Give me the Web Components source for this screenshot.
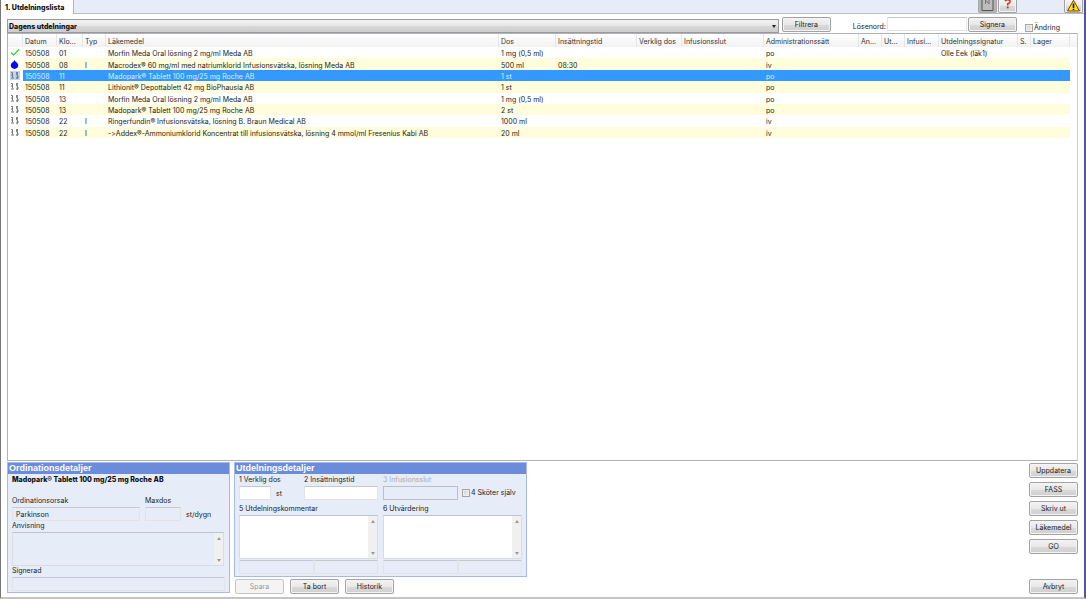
<!DOCTYPE html>
<html lang="sv">
<head>
<meta charset="utf-8">
<title>Utdelningslista</title>
<style>
  body { margin: 0; font: 7px/9px Inter, "Liberation Sans", sans-serif; font-feature-settings: "calt" 0; color: #222; }
</style>
</head>
<body>
<med-app></med-app>
<script>
const define = (name, html, setup) => {
  const template = document.createElement('template');
  template.innerHTML = html;
  customElements.define(name, class extends HTMLElement {
    constructor() {
      super();
      this.attachShadow({ mode: 'open' }).append(template.content.cloneNode(true));
    }
    connectedCallback() { if (setup) setup(this, this.shadowRoot); }
  });
};

/* Push button */
define('med-button', `
<style>
  :host { display: block; width: 49px; height: 15px; }
  button { box-sizing: border-box; width: 100%; height: 100%; padding: 0; border: 1px solid #a2a2a2; border-radius: 2px;
    background: linear-gradient(#f3f3f3, #e8e8e8 50%, #dadada 51%, #cfcfcf); box-shadow: inset 0 0 0 1px #f4f4f4;
    font: inherit; color: #222; display: flex; align-items: center; justify-content: center; }
  button:disabled { background: #f4f4f4; border-color: #c6c6c6; color: #999; }
  :host([icon]) { width: 19px; height: 13px; }
  :host([icon]) button { border-top: 0; border-radius: 0 0 2px 2px; align-items: flex-start; overflow: hidden; }
  :host([pressed]) button { background: #b4b4b4; box-shadow: none; border-color: #aaa; }
</style>
<button type="button"><slot></slot></button>`, (host, root) => {
  const button = root.querySelector('button');
  button.disabled = host.hasAttribute('disabled');
  if (host.title) button.setAttribute('aria-label', host.title);
});

/* Tick box with its label */
define('med-check', `
<style>
  :host { display: block; }
  label { display: flex; align-items: center; gap: 1px; white-space: nowrap; }
  input { appearance: none; box-sizing: border-box; width: 8px; height: 8px; margin: 0; border: 1px solid #a4a4a4;
    background: linear-gradient(135deg, #c9cdd2, #f4f4f4); box-shadow: inset 0 0 0 1px #eee; }
</style>
<label><input type="checkbox"><slot></slot></label>`);

/* Text area with a scroll track at its right */
define('med-area', `
<style>
  :host { display: flex; flex-direction: column; }
  label { height: 11px; white-space: nowrap; }
  .box { flex: 1; display: flex; box-sizing: border-box; border: 1px solid #dcdcdc; border-top-color: #bfc3ca; background: #fff; }
  :host([readonly]) .box { background: #e6edf9; }
  textarea { flex: 1; min-width: 0; border: 0; padding: 1px 3px; margin: 0; background: none; resize: none; overflow: hidden; font: inherit; outline: 0; }
  .track { width: 9px; background: #f0f0f0; display: flex; flex-direction: column; justify-content: space-between; align-items: center; padding: 4px 0 3px; box-sizing: border-box; }
  svg { display: block; width: 4px; height: 3px; fill: #999; }
</style>
<label for="t"><slot></slot></label>
<div class="box"><textarea id="t"></textarea>
  <div class="track"><svg viewBox="0 0 4 3"><path d="M2 0L4 3H0z"/></svg><svg viewBox="0 0 4 3"><path d="M2 3L4 0H0z"/></svg></div>
</div>`, (host, root) => {
  root.querySelector('textarea').readOnly = host.hasAttribute('readonly');
});

/* Single-line field with its label above */
define('med-field', `
<style>
  :host { display: block; }
  label { display: flex; flex-direction: column; white-space: nowrap; }
  span { height: 11px; }
  input { box-sizing: border-box; width: 100%; min-width: 0; height: 14px; padding: 0 3px; margin: 0; border: 1px solid #e3e3e3; border-top-color: #c6cad0;
    border-radius: 0; background: #fff; font: inherit; color: #222; }
  :host([readonly]) input { background: #e6edf9; }
  :host([disabled]) span { color: #aaa; }
  :host([disabled]) input { background: #e6edf9; border-color: #bcbfc6; }
  :host([bare]) span { display: none; }
</style>
<label><span><slot></slot></span><input type="text"></label>`, (host, root) => {
  const input = root.querySelector('input');
  input.value = host.getAttribute('value') || '';
  input.readOnly = host.hasAttribute('readonly');
  input.disabled = host.hasAttribute('disabled');
  if (host.hasAttribute('bare')) input.setAttribute('aria-label', host.title);
});

/* Blue-headed panel */
define('med-panel', `
<style>
  :host { display: flex; flex-direction: column; box-sizing: border-box; border: 1px solid #a5b9ec; background: #e6edf9; }
  h2 { margin: 0; padding: 0 1px; height: 11px; background: #6b8bdb; color: #fff; font: bold 9px/11px "Liberation Sans", Arial, sans-serif; }
</style>
<h2><slot name="title"></slot></h2><slot></slot>`);

define('med-tabs', `
<style>
  :host { display: flex; height: 13px; background: #e6edf9; border-bottom: 1px solid #b9bfc9; }
  a { display: block; box-sizing: border-box; height: 14px; padding: 3px 9px 0 4px; background: #fff; border-right: 1px solid #b0b6c0; color: #111; font-weight: 800; text-decoration: none; white-space: nowrap; }
  nav { flex: 1; display: flex; }
  .tools { display: flex; gap: 1px; padding-right: 1px; }
  .warn { margin-left: 46px; }
  svg { display: block; }
</style>
<nav><a href="#lista">1. Utdelningslista</a></nav>
<div class="tools">
  <med-button icon pressed title="Anteckning"><svg width="13" height="12" viewBox="0 0 13 12"><path d="M1 0V10.500H12V0" fill="#bdbdbd" stroke="#555"/><path d="M4.500 0V4M8 0V4M4.500 0L8 4" stroke="#777" fill="none"/></svg></med-button>
  <med-button icon title="Hjälp"><svg width="9" height="12" viewBox="0 0 9 12"><path d="M2 1.200Q3-.5 5-.3Q7.500 0 7 2Q6.500 3 4.700 4V5.500" fill="none" stroke="#f01c1c" stroke-width="1.500"/><rect x="3.800" y="6.500" width="1.800" height="1.800" fill="#f01c1c"/></svg></med-button>
  <med-button class="warn" icon title="Varning"><svg width="15" height="12" viewBox="0 0 15 12"><path d="M7.500 .3L13.500 11H1.500z" fill="#ffe600" stroke="#7a3c00" stroke-linejoin="round"/><path d="M7.500 3.500V8" stroke="#111" stroke-width="1.600"/><rect x="6.700" y="8.800" width="1.600" height="1.400" fill="#111"/></svg></med-button>
</div>`);

define('med-toolbar', `
<style>
  :host { display: flex; align-items: flex-start; height: 16px; }
  .pick { flex: 1; position: relative; margin-top: 2px; display: flex; }
  select { appearance: none; box-sizing: border-box; width: 100%; height: 14px; margin: 0; padding: 0 1px; border: 1px solid #999; border-radius: 0;
    background: linear-gradient(#f2f2f2, #e6e6e6 50%, #d8d8d8 51%, #cdcdcd); font: inherit; font-weight: 800; color: #111; }
  .pick svg { position: absolute; right: 3px; top: 6px; }
  med-button { margin-left: 3px; }
  label { margin: 5px 1px 0 22px; }
  med-field { width: 80px; }
  .sign { margin-left: 1px; }
  med-check { margin: 6px 18px 0 8px; }
</style>
<div class="pick"><select aria-label="Lista"><option>Dagens utdelningar</option></select><svg width="4" height="3"><path d="M0 0H4L2 3z" fill="#222"/></svg></div>
<med-button>Filtrera</med-button>
<label>Lösenord:</label>
<med-field bare title="Lösenord"></med-field>
<med-button class="sign">Signera</med-button>
<med-check>Ändring</med-check>`, (host, root) => {
  const input = root.querySelector('med-field').shadowRoot.querySelector('input');
  root.querySelector('label').onclick = () => input.focus();
});

const columns = [['', 15], ['Datum', 34], ['Klo...', 26], ['Typ', 23], ['Läkemedel', 0], ['Dos', 57], ['Insättningstid', 81], ['Verklig dos', 45], ['Infusionsslut', 82],
  ['Administrationssätt', 95], ['An...', 23], ['Ut...', 23], ['Infusi...', 34], ['Utdelningssignatur', 79], ['S.', 13], ['Lager', 39]];
const rows = [
  ['check', '150508', '01', '', 'Morfin Meda Oral lösning 2 mg/ml Meda AB', '1 mg (0,5 ml)', '', 'po', 'Olle Eek (läk1)'],
  ['drop', '150508', '08', 'I', 'Macrodex® 60 mg/ml med natriumklorid Infusionsvätska, lösning Meda AB', '500 ml', '08:30', 'iv'],
  ['steps', '150508', '11', '', 'Madopark® Tablett 100 mg/25 mg Roche AB', '1 st', '', 'po'],
  ['steps', '150508', '11', '', 'Lithionit® Depottablett 42 mg BioPhausia AB', '1 st', '', 'po'],
  ['steps', '150508', '13', '', 'Morfin Meda Oral lösning 2 mg/ml Meda AB', '1 mg (0,5 ml)', '', 'po'],
  ['steps', '150508', '13', '', 'Madopark® Tablett 100 mg/25 mg Roche AB', '2 st', '', 'po'],
  ['steps', '150508', '22', 'I', 'Ringerfundin® Infusionsvätska, lösning B. Braun Medical AB', '1000 ml', '', 'iv'],
  ['steps', '150508', '22', 'I', '-&gt;Addex®-Ammoniumklorid Koncentrat till infusionsvätska, lösning 4 mmol/ml Fresenius Kabi AB', '20 ml', '', 'iv'],
];
const icons = {
  check: '<svg width="10" height="9" viewBox="0 0 10 9"><path d="M1 4.500L3.500 7L9 1.500" fill="none" stroke="#1fdc1f" stroke-width="1.200"/></svg>',
  drop: '<svg width="10" height="9" viewBox="0 0 10 9"><path d="M4.500 0Q5 1.600 7.300 3Q9.200 5.500 7.300 7.800Q4.500 10 1.700 7.800Q-.2 5.500 1.700 3Q4 1.600 4.500 0z" fill="#0808f0"/></svg>',
  steps: '<svg width="10" height="9" viewBox="0 0 10 9" fill="none" stroke="#777"><path d="M1 1.500H2.500V6.500M1 4H2.500M1 7H4"/><path d="M8 1.500H6.500V3.500L8 5V7H6M7.300 1V8"/></svg>',
};
const cells = r => [icons[r[0]], r[1], r[2], r[3], r[4], r[5], r[6], '', '', r[7], '', '', '', r[8] || '', '', '', ''];

define('med-table', `
<style>
  :host { display: block; box-sizing: border-box; border: 1px solid #aeb2ba; border-right-color: #c8ccd3; background: #fff; }
  table { width: 100%; height: 104px; table-layout: fixed; border-collapse: separate; border-spacing: 0; }
  th, td { padding: 2px 2px 0; text-align: left; font-weight: normal; white-space: nowrap; overflow: hidden; vertical-align: middle; line-height: 9px; }
  thead tr { height: 13px; }
  th { background: linear-gradient(#fff, #f2f2f2); border-right: 1px solid #e6e6e6; color: #333; }
  th:last-child { border: 0; }
  td:first-child { padding: 0 2px; background: #fff; }
  td:last-child { background: #fff; }
  tr:nth-child(even) td:not(:first-child, :last-child) { background: #fffddb; }
  tr.sel td:not(:first-child, :last-child) { background: #3399ff; color: #d9ecff; }
  tr.sel td:first-child svg { background: #b9d6f5; }
  svg { display: block; }
</style>
<table>
  <colgroup>${columns.map(c => c[1] ? `<col style="width:${c[1]}px">` : '<col>').join('')}<col style="width:7px"></colgroup>
  <thead><tr>${columns.map(c => `<th>${c[0]}</th>`).join('')}<th></th></tr></thead>
  <tbody>${rows.map((r, i) => `<tr${i === 2 ? ' class="sel"' : ''}>${cells(r).map(c => `<td>${c}</td>`).join('')}</tr>`).join('')}</tbody>
</table>`);

define('med-order', `
<style>
  :host { display: block; }
  med-panel { height: 100%; }
  .body { flex: 1; display: flex; flex-direction: column; padding: 1px 4px 3px; }
  h3 { margin: 0 0 12px; font: inherit; font-weight: 800; color: #111; white-space: nowrap; }
  .row { display: flex; gap: 5px; }
  .cause { flex: 1; }
  .max { width: 36px; }
  .unit { margin-top: 14px; width: 39px; }
  med-area { height: 45px; margin: 0 1px 0 0; }
</style>
<med-panel><span slot="title">Ordinationsdetaljer</span>
  <div class="body">
    <h3>Madopark® Tablett 100 mg/25 mg Roche AB</h3>
    <div class="row"><med-field class="cause" readonly value="Parkinson">Ordinationsorsak</med-field><med-field class="max" readonly>Maxdos</med-field><span class="unit">st/dygn</span></div>
    <med-area readonly>Anvisning</med-area>
    <med-field readonly>Signerad</med-field>
  </div>
</med-panel>`);

define('med-give', `
<style>
  :host { display: block; }
  .body { display: grid; grid-template-columns: 139px 139px; gap: 4px 5px; padding: 1px 4px 2px; }
  .row { display: flex; }
  .dose { width: 32px; }
  .unit { margin: 14px 0 0 5px; width: 28px; }
  .time { flex: 1; }
  .end { width: 75px; }
  med-check { margin: 13px 0 0 4px; }
  med-area { height: 55px; }
  .foot { display: grid; grid-template-columns: 75px 1fr; }
  .stack { display: grid; gap: 1px; }
</style>
<med-panel><span slot="title">Utdelningsdetaljer</span>
  <div class="body">
    <div class="row"><med-field class="dose">1 Verklig dos</med-field><span class="unit">st</span><med-field class="time">2 Insättningstid</med-field></div>
    <div class="row"><med-field class="end" disabled>3 Infusionsslut</med-field><med-check>4 Sköter själv</med-check></div>
    <div class="stack"><med-area>5 Utdelningskommentar</med-area><div class="foot"><med-field bare readonly title="Kommentar datum"></med-field><med-field bare readonly title="Kommentar signatur"></med-field></div></div>
    <div class="stack"><med-area>6 Utvärdering</med-area><div class="foot"><med-field bare readonly title="Utvärdering datum"></med-field><med-field bare readonly title="Utvärdering signatur"></med-field></div></div>
  </div>
</med-panel>`);

define('med-app', `
<style>
  :host { display: flex; flex-direction: column; box-sizing: border-box; min-height: 100vh; background: #fff;
    border: solid; border-width: 0 2px 2px 1px; border-color: #888 #5553a8 #c4c4c4 #777; }
  main { flex: 1; display: flex; flex-direction: column; padding: 3px 6px 3px; }
  med-table { flex: 1; }
  footer { display: flex; gap: 4px; margin-top: 1px; }
  med-order { width: 223px; height: 131px; }
  .give { width: 293px; }
  .buttons { display: flex; gap: 6px; padding: 1px 1px 0; margin-top: 1px; }
  aside { margin: 1px 0 0 auto; display: flex; flex-direction: column; gap: 4px; }
  aside med-button:last-child { margin-top: auto; }
</style>
<med-tabs></med-tabs>
<main>
  <med-toolbar></med-toolbar>
  <med-table></med-table>
  <footer>
    <med-order></med-order>
    <div class="give"><med-give></med-give>
      <div class="buttons"><med-button disabled>Spara</med-button><med-button>Ta bort</med-button><med-button>Historik</med-button></div></div>
    <aside><med-button>Uppdatera</med-button><med-button>FASS</med-button><med-button>Skriv ut</med-button><med-button>Läkemedel</med-button><med-button>GO</med-button><med-button>Avbryt</med-button></aside>
  </footer>
</main>`);
</script>
</body>
</html>
